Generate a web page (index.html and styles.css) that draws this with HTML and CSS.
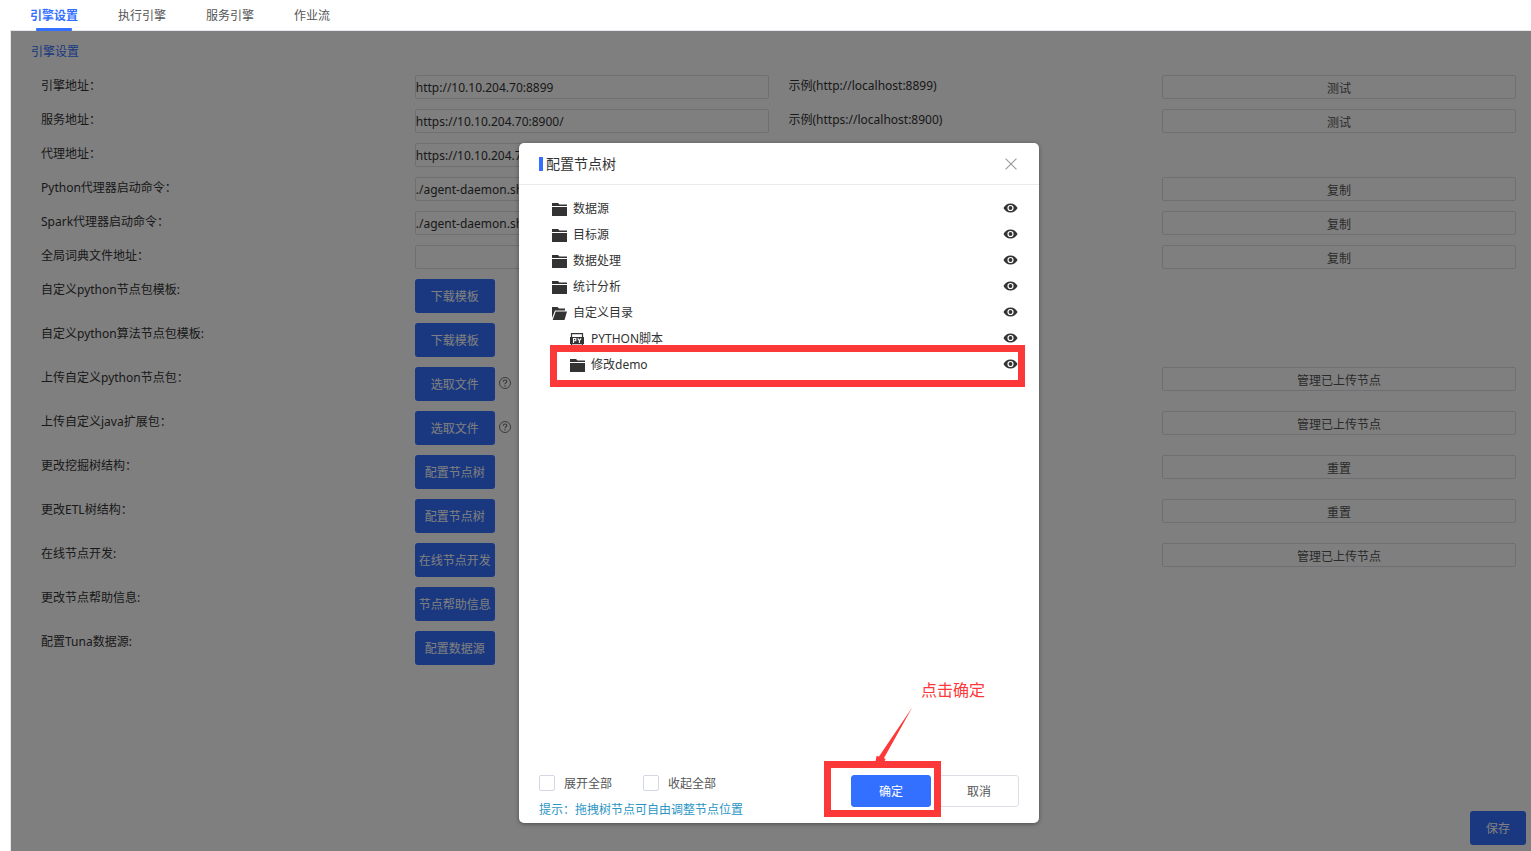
FILE: index.html
```html
<!DOCTYPE html>
<html lang="zh-CN">
  <head>
    <meta charset="UTF-8">
    <meta name="viewport" content="width=device-width, initial-scale=1">
    <title>引擎设置</title>
    <link rel="stylesheet" href="styles.css">
  </head>
  <body>
    <svg class="sprite" aria-hidden="true">
      <symbol id="folder" viewBox="0 0 15 13">
        <path d="M0 0h6l1.500 1.500H15V3H0zM0 4h15v9H0z"/>
      </symbol>
      <symbol id="folder-open" viewBox="0 0 15 13">
        <path d="M0 0h5.500l1.500 1.500H13V3.500H3L0 11z"/>
        <path d="M3.700 4.500H15L12.500 13H.7z"/>
      </symbol>
      <symbol id="python" viewBox="0 0 15 13">
        <path d="M1.500 5V.6h11V5M1.500 10v3M12.500 10v3M1.500 12.400h11" fill="none" stroke="#333" stroke-width="1.200"/>
        <path d="M0 4h14v7H0z"/>
        <path d="M3.500 10V5.500h2.300v2.300H3.500M7.700 5.300l1.700 2.200 1.800-2.200M9.400 7.500V10" fill="none" stroke="#fff" stroke-width="1.100"/>
      </symbol>
      <symbol id="eye" viewBox="0 0 14 10">
        <path fill-rule="evenodd" d="M7 .5C3.800.5 1.200 2.400 0 5c1.200 2.600 3.800 4.500 7 4.500s5.800-1.900 7-4.500C12.800 2.400 10.200.5 7 .5zM7 1.900a3.100 3.100 0 1 1 0 6.200 3.100 3.100 0 0 1 0-6.200z"/>
        <circle cx="7" cy="5" r="1.900"/>
      </symbol>
      <symbol id="help" viewBox="0 0 12 12">
        <circle cx="6" cy="6" r="5.500" fill="none" stroke="currentColor"/>
        <path d="M4.300 4.700C4.300 2.400 7.800 2.500 7.800 4.600 7.800 5.800 6 5.800 6 7.300M6 8.300v1.200" fill="none" stroke="currentColor" stroke-width="1.200"/>
      </symbol>
    </svg>

    <nav class="tabs">
      <a class="tab active" href="#">引擎设置</a>
      <a class="tab" href="#">执行引擎</a>
      <a class="tab" href="#">服务引擎</a>
      <a class="tab" href="#">作业流</a>
    </nav>

    <main class="panel">
      <h1 class="title">引擎设置</h1>
      <form class="form">
        <div class="row">
          <label for="engine">引擎地址：</label>
          <input class="field" id="engine" type="text" value="http://10.10.204.70:8899">
          <span class="sample">示例(http://localhost:8899)</span>
          <button class="plain" type="button">测试</button>
        </div>
        <div class="row">
          <label for="service">服务地址：</label>
          <input class="field" id="service" type="text" value="https://10.10.204.70:8900/">
          <span class="sample">示例(https://localhost:8900)</span>
          <button class="plain" type="button">测试</button>
        </div>
        <div class="row">
          <label for="proxy">代理地址：</label>
          <input class="field" id="proxy" type="text" value="https://10.10.204.70:8900/">
        </div>
        <div class="row">
          <label for="pyCmd">Python代理器启动命令：</label>
          <input class="field" id="pyCmd" type="text" value="./agent-daemon.sh">
          <button class="plain" type="button">复制</button>
        </div>
        <div class="row">
          <label for="sparkCmd">Spark代理器启动命令：</label>
          <input class="field" id="sparkCmd" type="text" value="./agent-daemon.sh">
          <button class="plain" type="button">复制</button>
        </div>
        <div class="row">
          <label for="dict">全局词典文件地址：</label>
          <input class="field" id="dict" type="text">
          <button class="plain" type="button">复制</button>
        </div>
        <div class="row">
          <label for="tplNode">自定义python节点包模板:</label>
          <div class="action"><button class="primary" id="tplNode" type="button">下载模板</button></div>
        </div>
        <div class="row">
          <label for="tplAlgo">自定义python算法节点包模板:</label>
          <div class="action"><button class="primary" id="tplAlgo" type="button">下载模板</button></div>
        </div>
        <div class="row">
          <label for="upPython">上传自定义python节点包：</label>
          <div class="action">
            <button class="primary" id="upPython" type="button">选取文件</button>
            <svg class="help"><use href="#help"/></svg>
          </div>
          <button class="plain" type="button">管理已上传节点</button>
        </div>
        <div class="row">
          <label for="upJava">上传自定义java扩展包：</label>
          <div class="action">
            <button class="primary" id="upJava" type="button">选取文件</button>
            <svg class="help"><use href="#help"/></svg>
          </div>
          <button class="plain" type="button">管理已上传节点</button>
        </div>
        <div class="row">
          <label for="mineTree">更改挖掘树结构：</label>
          <div class="action"><button class="primary" id="mineTree" type="button">配置节点树</button></div>
          <button class="plain" type="button">重置</button>
        </div>
        <div class="row">
          <label for="etlTree">更改ETL树结构：</label>
          <div class="action"><button class="primary" id="etlTree" type="button">配置节点树</button></div>
          <button class="plain" type="button">重置</button>
        </div>
        <div class="row">
          <label for="online">在线节点开发:</label>
          <div class="action"><button class="primary" id="online" type="button">在线节点开发</button></div>
          <button class="plain" type="button">管理已上传节点</button>
        </div>
        <div class="row">
          <label for="helpInfo">更改节点帮助信息:</label>
          <div class="action"><button class="primary" id="helpInfo" type="button">节点帮助信息</button></div>
        </div>
        <div class="row">
          <label for="tuna">配置Tuna数据源:</label>
          <div class="action"><button class="primary" id="tuna" type="button">配置数据源</button></div>
        </div>
      </form>
      <div class="save-bar">
        <button class="primary save" type="button">保存</button>
      </div>

      <div class="mask">
        <section class="dialog" role="dialog" aria-labelledby="dialogTitle">
          <header class="dialog-header">
            <h2 class="dialog-title" id="dialogTitle">配置节点树</h2>
            <button class="close" type="button" aria-label="关闭">
              <svg viewBox="0 0 11 11"><path d="M.5.5l10 10M10.500.5l-10 10"/></svg>
            </button>
          </header>

          <ul class="tree">
            <li class="node"><svg class="icon"><use href="#folder"/></svg><span>数据源</span><svg class="eye"><use href="#eye"/></svg></li>
            <li class="node"><svg class="icon"><use href="#folder"/></svg><span>目标源</span><svg class="eye"><use href="#eye"/></svg></li>
            <li class="node"><svg class="icon"><use href="#folder"/></svg><span>数据处理</span><svg class="eye"><use href="#eye"/></svg></li>
            <li class="node"><svg class="icon"><use href="#folder"/></svg><span>统计分析</span><svg class="eye"><use href="#eye"/></svg></li>
            <li class="node"><svg class="icon"><use href="#folder-open"/></svg><span>自定义目录</span><svg class="eye"><use href="#eye"/></svg></li>
            <li class="node child"><svg class="icon"><use href="#python"/></svg><span>PYTHON脚本</span><svg class="eye"><use href="#eye"/></svg></li>
            <li class="node child"><svg class="icon"><use href="#folder"/></svg><span>修改demo</span><svg class="eye"><use href="#eye"/></svg></li>
          </ul>

          <footer class="dialog-footer">
            <div class="options">
              <div class="checks">
                <label class="check"><input type="checkbox">展开全部</label>
                <label class="check"><input type="checkbox">收起全部</label>
              </div>
              <p class="hint">提示：拖拽树节点可自由调整节点位置</p>
            </div>
            <div class="buttons">
              <button class="confirm" type="button">确定</button>
              <button class="cancel" type="button">取消</button>
            </div>
          </footer>

          <!-- 操作标注 -->
          <div class="mark mark-node"></div>
          <div class="mark mark-confirm"></div>
          <svg class="arrow" viewBox="0 0 38 58"><path d="M37.500 0L9 51l1.500 1L8 58H0l1.500-9 2.500.5z"/></svg>
          <p class="note">点击确定</p>
        </section>
      </div>
    </main>
  </body>
</html>
```
FILE: styles.css
```css
* {
  box-sizing: border-box;
  margin: 0;
  padding: 0;
}

body {
  min-height: 100vh;
  display: flex;
  flex-direction: column;
  padding-left: 10px;
  background: #fff;
  color: #333;
  font-family: "Noto Sans", "Noto Sans CJK SC", sans-serif;
  font-size: 12px;
  line-height: 22px;
}

button,
input {
  font: inherit;
}

button {
  padding-top: 2px;
  cursor: pointer;
}

.sprite {
  position: absolute;
  width: 0;
  height: 0;
}

/* tabs */
.tabs {
  display: flex;
  height: 31px;
  border-bottom: 1px solid #e4e7ed;
}

.tab {
  position: relative;
  padding: 0 20px;
  line-height: 31px;
  color: #555;
  text-decoration: none;
}

.tab.active {
  color: #3370ff;
  font-weight: bold;
}

.tab.active::after {
  content: "";
  position: absolute;
  left: 26px;
  right: 26px;
  bottom: -1px;
  height: 3px;
  border-radius: 1px;
  background: #3370ff;
}

/* settings */
.panel {
  position: relative;
  flex: 1;
  display: flex;
  flex-direction: column;
  border-left: 1px solid #e4e7ed;
}

.title {
  padding: 10px 20px 12px;
  color: #3370ff;
  font-size: 12px;
  font-weight: normal;
}

.form {
  display: flex;
  flex-direction: column;
  gap: 10px;
  padding: 0 15px 0 30px;
}

.row {
  display: grid;
  grid-template-columns: repeat(4, 1fr);
  column-gap: 20px;
  align-items: start;
}

.field {
  width: 100%;
  height: 24px;
  border: 1px solid #dcdfe6;
  border-radius: 2px;
  background: #fff;
  color: #333;
}

.plain {
  grid-column: 4;
  height: 24px;
  border: 1px solid #dcdfe6;
  border-radius: 2px;
  background: #fff;
  color: #555;
}

.action {
  display: flex;
  align-items: center;
  gap: 4px;
}

.primary {
  width: 80px;
  height: 34px;
  border: none;
  border-radius: 3px;
  background: #3370ff;
  color: #fff;
}

.help {
  width: 12px;
  height: 12px;
  margin-bottom: 2px;
  color: #777;
}

.save-bar {
  display: flex;
  justify-content: flex-end;
  margin-top: auto;
  padding: 0 5px 6px;
}

.save {
  width: 56px;
}

/* dialog */
.mask {
  position: absolute;
  inset: 0;
  display: flex;
  justify-content: center;
  padding: 112px 0 28px 16px;
  background: rgba(0, 0, 0, 0.5);
}

.dialog {
  position: relative;
  display: flex;
  flex-direction: column;
  width: 520px;
  border-radius: 5px;
  background: #fff;
  box-shadow: 0 1px 4px rgba(0, 0, 0, 0.4);
}

.dialog-header {
  display: flex;
  align-items: center;
  justify-content: space-between;
  height: 42px;
  padding: 0 22px 0 20px;
  border-bottom: 1px solid #ebebeb;
}

.dialog-title {
  padding-left: 3px;
  border-left: 4px solid #3370ff;
  font-size: 14px;
  font-weight: normal;
  line-height: 14px;
}

.close {
  display: flex;
  padding: 0;
  border: none;
  background: none;
}

.close svg {
  width: 12px;
  height: 12px;
  stroke: #999;
}

.tree {
  flex: 1;
  padding: 11px 21px 0 33px;
  list-style: none;
}

.node {
  display: flex;
  align-items: center;
  gap: 6px;
  height: 26px;
}

.child {
  padding-left: 18px;
}

.icon {
  width: 15px;
  height: 13px;
  fill: #333;
}

.eye {
  width: 15px;
  height: 10px;
  margin: 0 0 2px auto;
  fill: #333;
}

.dialog-footer {
  display: flex;
  justify-content: space-between;
  padding: 0 20px 2px;
}

.options {
  display: flex;
  flex-direction: column;
  gap: 4px;
}

.checks {
  display: flex;
  gap: 31px;
}

.check {
  display: flex;
  align-items: center;
  gap: 9px;
  color: #555;
}

.check input {
  appearance: none;
  width: 16px;
  height: 16px;
  margin-bottom: 2px;
  border: 1px solid #d3d6e4;
  border-radius: 2px;
}

.hint {
  color: #2b95c4;
}

.buttons {
  display: flex;
  gap: 8px;
  padding-top: 2px;
}

.confirm,
.cancel {
  width: 80px;
  height: 32px;
  border: 1px solid #3370ff;
  border-radius: 3px;
  background: #3370ff;
  color: #fff;
}

.cancel {
  border-color: #dcdfe6;
  background: #fff;
  color: #555;
}

/* marks drawn over the dialog */
.mark {
  position: absolute;
  border: 7px solid #fd3838;
  pointer-events: none;
}

.mark-node {
  top: 202px;
  left: 31px;
  width: 475px;
  height: 42px;
}

.mark-confirm {
  right: 98px;
  bottom: 6px;
  width: 117px;
  height: 56px;
}

.arrow {
  position: absolute;
  right: 126px;
  bottom: 58px;
  width: 38px;
  height: 58px;
  fill: #fd3838;
}

.note {
  position: absolute;
  right: 54px;
  bottom: 122px;
  color: #fd3838;
  font-size: 16px;
}
```
